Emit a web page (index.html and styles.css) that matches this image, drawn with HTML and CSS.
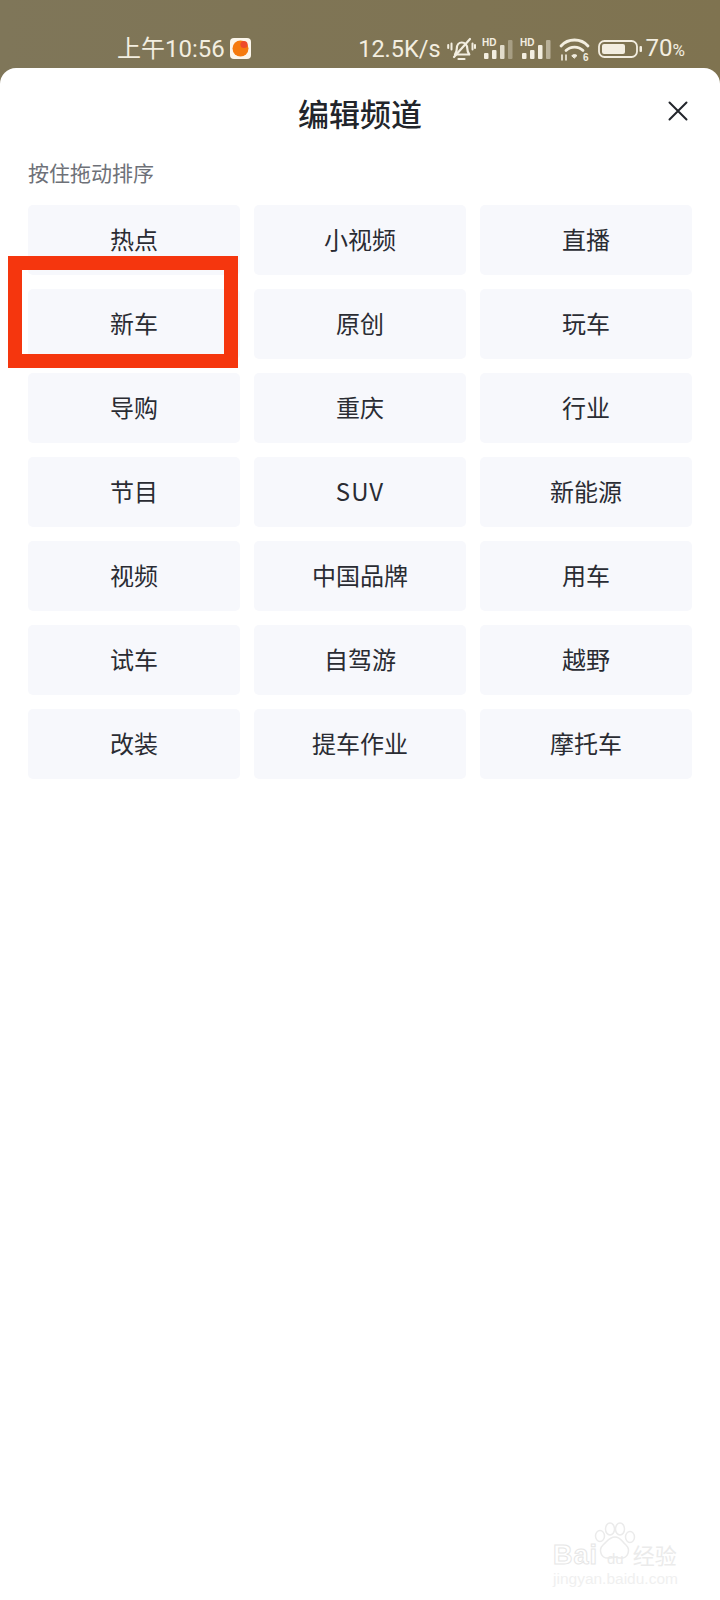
FILE: index.html
```html
<!doctype html>
<html lang="zh-CN">
<head>
  <meta charset="UTF-8">
  <title>编辑频道</title>
  <link rel="stylesheet" href="styles.css">
</head>
<body>
  <div class="status-bar">
    <div class="status-left">
      <span class="time">上午10:56</span>
      <svg class="app-icon" width="21" height="21" viewBox="0 0 21 21">
        <rect width="21" height="21" rx="4" fill="#fbf6ec"/>
        <circle cx="10.5" cy="10.5" r="8" fill="#f57a0e"/>
        <circle cx="14" cy="6.5" r="3.6" fill="#ee4a2a"/>
      </svg>
    </div>
    <div class="status-right">
      <span class="speed">12.5K/s</span>
      <svg class="bell" width="29" height="24" viewBox="0 0 29 24" fill="none" stroke="#f3eee0" stroke-width="2.200" stroke-linecap="round" stroke-linejoin="round">
        <path d="M8 17.500c1.500-2 1.800-3.500 1.800-6 0-3.500 2-6 5-6s5.500 2.500 5.500 6c0 2.500 .5 4 2 6z"/>
        <path d="M11.500 22h6"/>
        <path d="M7 20L23 2"/>
        <path d="M4.500 6.500v6M1.200 8v3M25.500 6.500v6M28 8v3" stroke-width="2"/>
      </svg>
      <svg class="signal" width="32" height="22" viewBox="0 0 32 22">
        <text x="0" y="8" class="hd">HD</text>
        <rect x="2" y="15" width="4.500" height="6" rx="1" fill="#f3eee0"/>
        <rect x="10" y="12" width="4.500" height="9" rx="1" fill="#f3eee0"/>
        <rect x="18" y="7" width="4.500" height="14" rx="1" fill="#f3eee0" opacity=".85"/>
        <rect x="26" y="2" width="4.500" height="19" rx="1" fill="#f3eee0" opacity=".35"/>
      </svg>
      <svg class="signal" width="32" height="22" viewBox="0 0 32 22">
        <text x="0" y="8" class="hd">HD</text>
        <rect x="2" y="15" width="4.500" height="6" rx="1" fill="#f3eee0"/>
        <rect x="10" y="12" width="4.500" height="9" rx="1" fill="#f3eee0"/>
        <rect x="18" y="7" width="4.500" height="14" rx="1" fill="#f3eee0"/>
        <rect x="26" y="2" width="4.500" height="19" rx="1" fill="#f3eee0" opacity=".5"/>
      </svg>
      <svg class="wifi" width="31" height="24" viewBox="0 0 31 24" fill="none" stroke="#f3eee0" stroke-width="2.800" stroke-linecap="round">
        <path d="M2 9c7-8 20-8 27 0"/>
        <path d="M7 13.500c4.500-4.500 12.500-4.500 17 0"/>
        <path d="M13 18.500c1.500-1.200 3.500-1.200 5 0l-2.500 2.500z" fill="#f3eee0" stroke-width="1"/>
        <path d="M3 18v5M7 18v5" stroke-width="1.600"/>
        <text x="24" y="23.500" class="wifi-six">6</text>
      </svg>
      <svg class="battery" width="44" height="18" viewBox="0 0 44 18">
        <rect x="1" y="1" width="38" height="16" rx="5.500" fill="none" stroke="#f3eee0" stroke-width="1.800"/>
        <rect x="4" y="4" width="23" height="10" rx="2" fill="#f3eee0"/>
        <rect x="41.500" y="6" width="2.500" height="6" rx="1" fill="#f3eee0"/>
      </svg>
      <span class="level">70<small>%</small></span>
    </div>
  </div>

  <div class="sheet">
    <div class="sheet-head">
      <h1>编辑频道</h1>
      <svg class="close" width="20" height="20" viewBox="0 0 20 20" fill="none" stroke="#22252b" stroke-width="2" stroke-linecap="round">
        <path d="M1.500 1.500l17 17M18.500 1.500l-17 17"/>
      </svg>
    </div>
    <p class="hint">按住拖动排序</p>
    <div class="channels">
      <div class="channel">热点</div>
      <div class="channel">小视频</div>
      <div class="channel">直播</div>
      <div class="channel">新车</div>
      <div class="channel">原创</div>
      <div class="channel">玩车</div>
      <div class="channel">导购</div>
      <div class="channel">重庆</div>
      <div class="channel">行业</div>
      <div class="channel">节目</div>
      <div class="channel latin">SUV</div>
      <div class="channel">新能源</div>
      <div class="channel">视频</div>
      <div class="channel">中国品牌</div>
      <div class="channel">用车</div>
      <div class="channel">试车</div>
      <div class="channel">自驾游</div>
      <div class="channel">越野</div>
      <div class="channel">改装</div>
      <div class="channel">提车作业</div>
      <div class="channel">摩托车</div>
    </div>
  </div>

  <div class="red-box"></div>

  <div class="watermark">
    <svg class="paw" width="42" height="38" viewBox="0 0 42 38" fill="none" stroke="#ebebeb" stroke-width="1.500">
      <ellipse cx="6" cy="14" rx="4.500" ry="5.500"/>
      <ellipse cx="16" cy="7" rx="4.500" ry="6"/>
      <ellipse cx="26" cy="7" rx="4.500" ry="6"/>
      <ellipse cx="36" cy="15" rx="4.500" ry="5.500"/>
      <path d="M21 15c6 0 7 5 11 8 5 5 2 14-6 13-2 0-3-1-5-1s-3 1-6 1c-8 1-11-8-6-13 4-3 6-8 12-8z"/>
    </svg>
    <div class="mark-row"><span class="mark-bai">Bai</span><span class="mark-du">du</span><span class="mark-cn">经验</span></div>
    <div class="mark-url">jingyan.baidu.com</div>
  </div>
</body>
</html>
```

FILE: styles.css
```css
* {
  box-sizing: border-box;
}
body {
  margin: 0;
  width: 720px;
  height: 1600px;
  position: relative;
  overflow: hidden;
  background: linear-gradient(90deg, #7f7659, #7f7350);
  font-family: "Noto Sans CJK SC", "Noto Sans", sans-serif;
}
.status-bar {
  height: 68px;
  padding: 29px 35px 0 117px;
  display: flex;
  align-items: center;
  justify-content: space-between;
  color: #f3eee0;
}
.status-left {
  display: flex;
  align-items: center;
  gap: 5px;
}
.time {
  font-family: Roboto, "Noto Sans CJK SC", sans-serif;
  font-size: 24px;
  line-height: 30px;
}
.status-right {
  display: flex;
  align-items: center;
}
.speed,
.level {
  font-family: Roboto, sans-serif;
  font-size: 23.500px;
  line-height: 30px;
}
.level {
  margin-left: 4px;
  font-size: 24px;
}
.level small {
  font-size: 17px;
}
.bell {
  margin-left: 6px;
}
.signal {
  margin-left: 6px;
}
.wifi {
  margin-left: 7px;
}
.battery {
  margin-left: 8px;
}
.hd,
.wifi-six {
  font-family: "Liberation Sans", sans-serif;
  font-size: 10px;
  font-weight: bold;
  fill: #f3eee0;
  stroke: none;
}
.sheet {
  height: 1532px;
  background: #fff;
  border-radius: 16px 16px 0 0;
  padding: 0 28px;
}
.sheet-head {
  height: 90px;
  display: flex;
  align-items: center;
  justify-content: center;
  position: relative;
}
h1 {
  margin: 0;
  font-size: 31px;
  font-weight: 500;
  line-height: 90px;
  color: #22252b;
}
.close {
  position: absolute;
  right: 4px;
  top: 33px;
}
.hint {
  margin: -1px 0 0;
  height: 48px;
  font-size: 21px;
  line-height: 30px;
  color: #6e7178;
}
.channels {
  display: grid;
  grid-template-columns: repeat(3, 212px);
  grid-auto-rows: 70px;
  gap: 14px;
}
.channel {
  background: #f7f8fc;
  border-radius: 5px;
  padding-bottom: 3px;
  display: flex;
  align-items: center;
  justify-content: center;
  font-size: 24px;
  color: #2a2c33;
}
.latin {
  letter-spacing: 1px;
}
.red-box {
  position: absolute;
  left: 8px;
  top: 256px;
  width: 230px;
  height: 112px;
  border: 14px solid #f5360e;
}
.watermark {
  position: absolute;
  left: 553px;
  top: 1522px;
  width: 130px;
  color: #ebebeb;
}
.paw {
  position: absolute;
  left: 41px;
  top: 0;
}
.mark-row {
  margin-top: 16px;
  display: flex;
  align-items: baseline;
  height: 28px;
}
.mark-bai {
  font-family: "Liberation Sans", sans-serif;
  font-size: 27px;
  font-weight: bold;
  letter-spacing: 1px;
  color: #fff;
  -webkit-text-stroke: 1px #e6e6e6;
}
.mark-du {
  font-family: "Liberation Sans", sans-serif;
  font-size: 15px;
  margin-left: 9px;
  position: relative;
}
.mark-cn {
  font-size: 22px;
  margin-left: 9px;
}
.mark-url {
  font-family: "Liberation Sans", sans-serif;
  font-size: 15.500px;
  line-height: 18px;
  margin-top: 4px;
  color: #f0f0f0;
  white-space: nowrap;
}
```
